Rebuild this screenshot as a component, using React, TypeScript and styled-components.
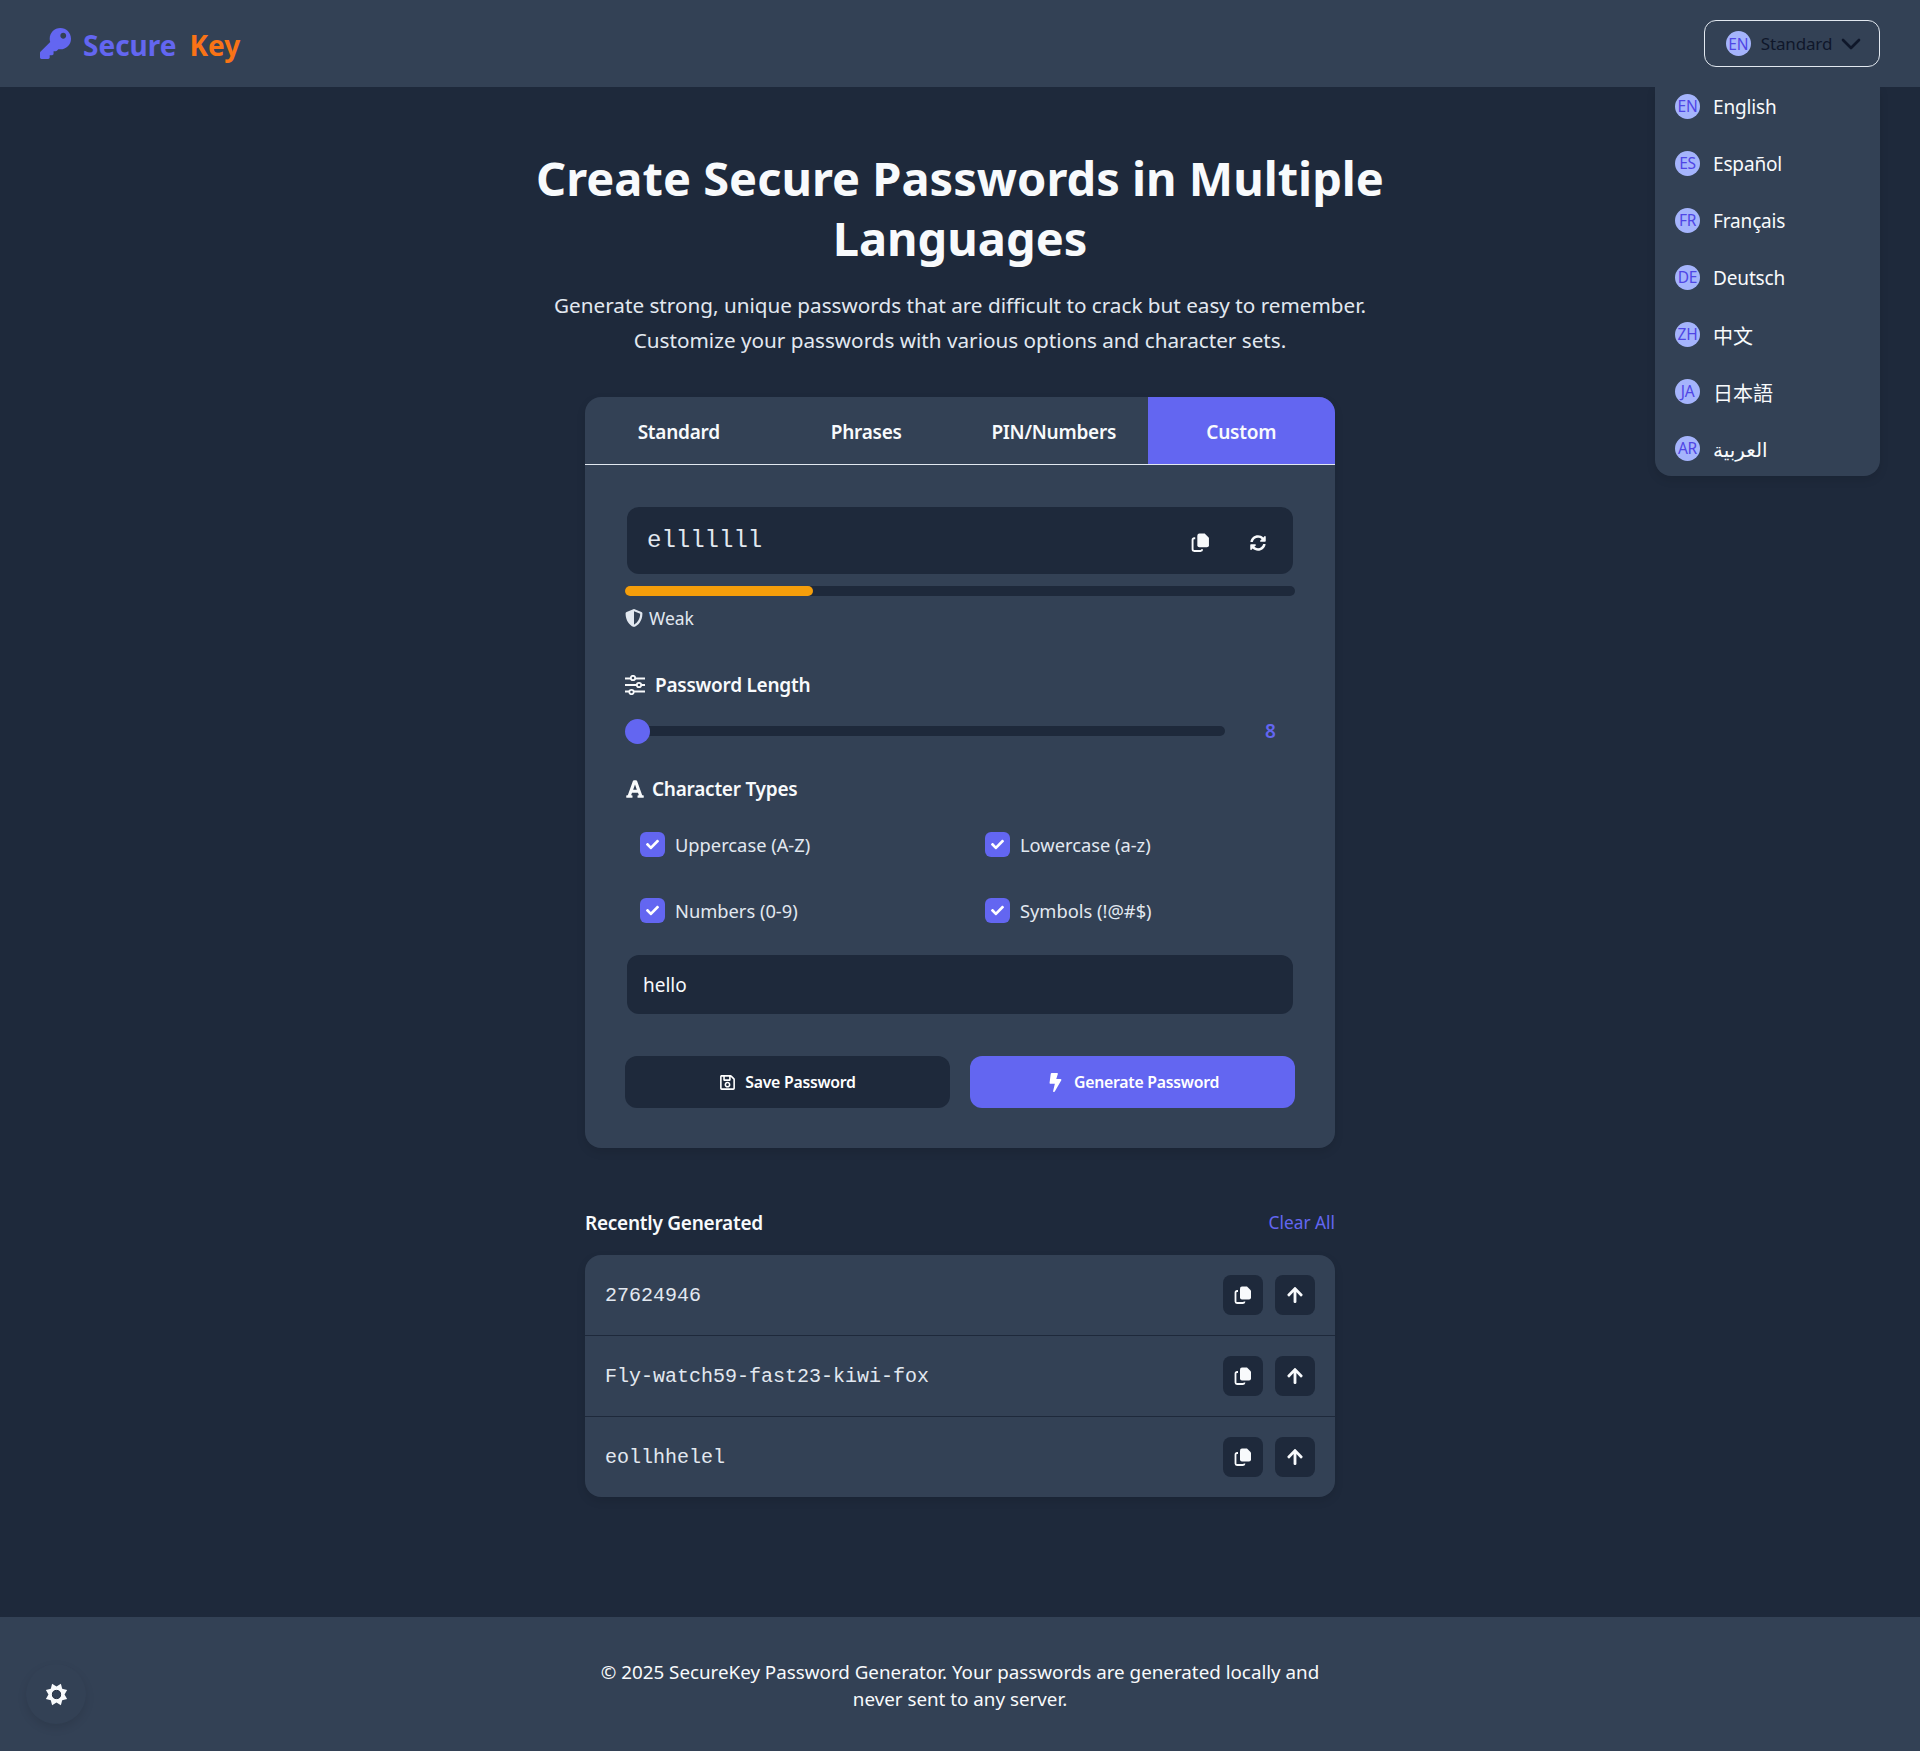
import styled, { createGlobalStyle } from 'styled-components';
import { FaArrowUp, FaBolt, FaCheck, FaFont, FaKey, FaRegSave, FaShieldAlt, FaSyncAlt } from 'react-icons/fa';
import { ChevronDown } from 'lucide-react';

const GlobalStyle = createGlobalStyle`
  * { box-sizing: border-box; }
  body {
    margin: 0;
    background: #1e293b;
    color: #f8fafc;
    font-family: "Noto Sans", "Noto Sans CJK SC", "DejaVu Sans", sans-serif;
  }
`;

const Page = styled.div`
  min-height: 1751px;
  display: flex;
  flex-direction: column;
  position: relative;
`;

const Header = styled.header`
  height: 87px;
  background: #334155;
  display: flex;
  align-items: center;
  justify-content: space-between;
  padding: 0 40px;
  position: relative;
  z-index: 2;
`;

const Logo = styled.div`
  display: flex;
  align-items: center;
  gap: 12px;
  font-size: 28px;
  font-weight: 700;
  color: #6366f1;
  svg { font-size: 31px; }
`;

const LogoText = styled.span`
  position: relative;
  top: 1px;
`;

const LogoAccent = styled.span`
  color: #f97316;
  margin-left: 13px;
`;

const LangButton = styled.button`
  width: 176px;
  height: 47px;
  padding: 0 0 0 1px;
  background: transparent;
  border: 1px solid #e2e8f0;
  border-radius: 12px;
  display: flex;
  align-items: center;
  justify-content: center;
  gap: 10px;
  color: #0f172a;
  font: inherit;
  font-size: 17px;
  letter-spacing: -0.15px;
  svg { margin: 0 -8px 0 -7px; }
`;

const Badge = styled.span`
  width: 25px;
  height: 25px;
  border-radius: 50%;
  background: #a5b4fc;
  color: #4f46e5;
  font-size: 15.500px;
  letter-spacing: -0.3px;
  display: flex;
  align-items: center;
  justify-content: center;
  flex: none;
`;

const Menu = styled.ul`
  position: absolute;
  top: 87px;
  right: 40px;
  width: 225px;
  height: 389px;
  margin: 0;
  padding: 0 0 0 20px;
  list-style: none;
  background: #334155;
  border-radius: 0 0 16px 16px;
  box-shadow: 0 4px 10px rgba(0, 0, 0, 0.1);
  z-index: 1;
`;

const MenuItem = styled.li`
  height: 38px;
  margin-bottom: 19px;
  display: flex;
  align-items: center;
  gap: 13px;
`;

const MenuName = styled.span<{ $full: boolean }>`
  font-size: ${({ $full }) => ($full ? 20 : 19)}px;
  letter-spacing: ${({ $full }) => ($full ? 0 : -0.15)}px;
  position: relative;
  top: 1px;
`;

const Main = styled.main`
  flex: 1;
  display: flex;
  flex-direction: column;
  align-items: center;
  padding-top: 61px;
`;

const Title = styled.h1`
  width: 900px;
  margin: 0;
  font-size: 47px;
  line-height: 60px;
  font-weight: 700;
  text-align: center;
`;

const Lead = styled.p`
  width: 900px;
  margin: 20px 0 39px;
  font-size: 20.700px;
  line-height: 35px;
  text-align: center;
  color: #e2e8f0;
`;

const Card = styled.section`
  width: 750px;
  background: #334155;
  border-radius: 16px;
  box-shadow: 0 4px 10px rgba(0, 0, 0, 0.1);
  overflow: hidden;
`;

const Tabs = styled.div`
  display: grid;
  grid-template-columns: repeat(4, 1fr);
  border-bottom: 1px solid #e2e8f0;
`;

const Tab = styled.div<{ $active?: boolean }>`
  height: 67px;
  padding-top: 2px;
  display: flex;
  align-items: center;
  justify-content: center;
  font-size: 19px;
  letter-spacing: -0.25px;
  font-weight: 600;
  background: ${({ $active }) => ($active ? '#6366f1' : 'transparent')};
`;

const CardBody = styled.div`
  padding: 42px 40px 40px;
`;

const PasswordBox = styled.div`
  height: 67px;
  margin: 0 2px;
  background: #1e293b;
  border-radius: 12px;
  display: flex;
  align-items: center;
  padding: 0 20px;
`;

const PasswordText = styled.span`
  flex: 1;
  font-family: "Liberation Mono", monospace;
  font-size: 24px;
  color: #e2e8f0;
`;

const IconAction = styled.span`
  width: 57px;
  display: flex;
  justify-content: center;
  position: relative;
  top: 2px;
  left: -2px;
  font-size: 19px;
  color: #f8fafc;
  &:last-child { margin-right: -15px; }
`;

const Meter = styled.div`
  height: 10px;
  margin-top: 12px;
  background: #1e293b;
  border-radius: 5px;
`;

const MeterFill = styled.div`
  height: 100%;
  background: #f59e0b;
  border-radius: 5px;
`;

const Strength = styled.div`
  display: flex;
  align-items: center;
  gap: 6px;
  margin-top: 10px;
  font-size: 17.500px;
  color: #e2e8f0;
`;

const SectionLabel = styled.div<{ $top: number; $gap: number }>`
  display: flex;
  align-items: center;
  gap: ${({ $gap }) => $gap}px;
  margin-top: ${({ $top }) => $top}px;
  font-size: 19px;
  letter-spacing: -0.25px;
  font-weight: 600;
`;

const SliderRow = styled.div`
  display: flex;
  align-items: center;
  margin-top: 20px;
`;

const Slider = styled.input`
  appearance: none;
  flex: none;
  width: 600px;
  height: 10px;
  margin: 0;
  background: #1e293b;
  border-radius: 5px;
  &::-webkit-slider-thumb {
    appearance: none;
    width: 25px;
    height: 25px;
    border-radius: 50%;
    background: #6366f1;
  }
`;

const SliderValue = styled.span`
  margin-left: 40px;
  font-size: 19px;
  font-weight: 600;
  color: #6366f1;
`;

const Checks = styled.div`
  display: grid;
  grid-template-columns: 325px 325px;
  column-gap: 20px;
  row-gap: 41px;
  margin-top: 30px;
  padding-left: 15px;
`;

const Check = styled.label`
  display: flex;
  align-items: center;
  gap: 10px;
  height: 25px;
  font-size: 18.300px;
  color: #e2e8f0;
`;

const CheckBox = styled.span`
  width: 25px;
  height: 25px;
  border-radius: 6px;
  background: #6366f1;
  color: #fff;
  display: flex;
  align-items: center;
  justify-content: center;
  font-size: 13px;
`;

const TextField = styled.div`
  height: 59px;
  margin: 32px 2px 0;
  padding: 1px 16px 0;
  background: #1e293b;
  border-radius: 12px;
  display: flex;
  align-items: center;
  font-size: 19px;
`;

const Buttons = styled.div`
  display: grid;
  grid-template-columns: 1fr 1fr;
  gap: 20px;
  margin-top: 42px;
`;

const ActionButton = styled.button<{ $primary?: boolean }>`
  height: 52px;
  border: none;
  border-radius: 12px;
  background: ${({ $primary }) => ($primary ? '#6366f1' : '#1e293b')};
  color: #fff;
  font: inherit;
  font-size: 15.800px;
  letter-spacing: -0.25px;
  font-weight: 600;
  display: flex;
  align-items: center;
  justify-content: center;
  gap: 9px;
`;

const RecentHeader = styled.div`
  width: 750px;
  margin-top: 62px;
  height: 25px;
  display: flex;
  align-items: center;
  justify-content: space-between;
`;

const RecentTitle = styled.h2`
  margin: 0;
  font-size: 19px;
  letter-spacing: -0.25px;
  font-weight: 600;
`;

const ClearAll = styled.a`
  font-size: 17.300px;
  color: #6366f1;
`;

const RecentList = styled.div`
  width: 750px;
  margin-top: 20px;
  background: #334155;
  border-radius: 16px;
  box-shadow: 0 4px 10px rgba(0, 0, 0, 0.1);
`;

const RecentRow = styled.div`
  height: 81px;
  display: flex;
  align-items: center;
  gap: 12px;
  padding: 0 20px;
  border-bottom: 1px solid #1e293b;
  &:last-child {
    height: 80px;
    border-bottom: none;
  }
`;

const RecentText = styled.span`
  flex: 1;
  font-family: "Liberation Mono", monospace;
  font-size: 20px;
  color: #e2e8f0;
`;

const SmallButton = styled.span`
  width: 40px;
  height: 40px;
  border-radius: 8px;
  background: #1e293b;
  display: flex;
  align-items: center;
  justify-content: center;
  font-size: 18px;
`;

const Footer = styled.footer`
  height: 134px;
  background: #334155;
  display: flex;
  justify-content: center;
  padding-top: 42px;
  font-size: 18.800px;
  line-height: 27px;
  text-align: center;
`;

const FooterText = styled.p`
  width: 750px;
  margin: 0;
`;

const GearButton = styled.span`
  position: absolute;
  left: 26px;
  top: 1664px;
  width: 60px;
  height: 60px;
  border-radius: 50%;
  background: #334155;
  box-shadow: 0 4px 10px rgba(0, 0, 0, 0.1);
  display: flex;
  align-items: center;
  justify-content: center;
  font-size: 23px;
`;

function CopyIcon() {
  return (
    <svg width="1em" height="1em" viewBox="0 0 18 18" aria-hidden="true">
      <path d="M6 2.500A2 2 0 0 1 8 .5h5l4 4v7a2 2 0 0 1-2 2H8a2 2 0 0 1-2-2z" fill="currentColor" />
      <path d="M4 5H3a1.500 1.500 0 0 0-1.500 1.500v9A1.500 1.500 0 0 0 3 17h6a1.500 1.500 0 0 0 1.500-1.500" fill="none" stroke="currentColor" strokeWidth="1.800" />
    </svg>
  );
}

function SlidersIcon() {
  return (
    <svg width="20" height="20" viewBox="0 0 20 20" aria-hidden="true" stroke="currentColor" strokeWidth="1.800" fill="#334155">
      <path d="M0 3.500h20M0 10h20M0 16.500h20" />
      <circle cx="8" cy="3" r="2.200" />
      <circle cx="14" cy="10" r="2.200" />
      <circle cx="6.500" cy="17" r="2.200" />
    </svg>
  );
}

// eight pointed star with a ring in the middle, the settings glyph of the reference
function GearIcon() {
  const points = Array.from({ length: 16 }, (_, i) => {
    const r = i % 2 === 0 ? 12 : 8.4;
    const a = (i * Math.PI) / 8 + Math.PI / 8;
    return `${(12 + r * Math.cos(a)).toFixed(2)},${(12 + r * Math.sin(a)).toFixed(2)}`;
  });
  return (
    <svg width="1em" height="1em" viewBox="0 0 24 24" aria-hidden="true">
      <polygon points={points.join(' ')} fill="currentColor" />
      <circle cx="12" cy="12" r="4.300" fill="#334155" stroke="#1e293b" strokeWidth="1" />
    </svg>
  );
}

const LANGUAGES = [
  ['EN', 'English'],
  ['ES', 'Español'],
  ['FR', 'Français'],
  ['DE', 'Deutsch'],
  ['ZH', '中文'],
  ['JA', '日本語'],
  ['AR', 'العربية'],
];

const RECENT = ['27624946', 'Fly-watch59-fast23-kiwi-fox', 'eollhhelel'];

export default function App() {
  return (
    <Page>
      <GlobalStyle />
      <Header>
        <Logo>
          <FaKey />
          <LogoText>
            Secure<LogoAccent>Key</LogoAccent>
          </LogoText>
        </Logo>
        <LangButton>
          <Badge>EN</Badge>
          Standard
          <ChevronDown size={32} strokeWidth={2} />
        </LangButton>
      </Header>
      <Menu>
        {LANGUAGES.map(([code, name]) => (
          <MenuItem key={code}>
            <Badge>{code}</Badge>
            <MenuName $full={code === 'ZH' || code === 'JA' || code === 'AR'}>{name}</MenuName>
          </MenuItem>
        ))}
      </Menu>
      <Main>
        <Title>Create Secure Passwords in Multiple Languages</Title>
        <Lead>
          Generate strong, unique passwords that are difficult to crack but easy to remember.
          <br />
          Customize your passwords with various options and character sets.
        </Lead>
        <Card>
          <Tabs>
            <Tab>Standard</Tab>
            <Tab>Phrases</Tab>
            <Tab>PIN/Numbers</Tab>
            <Tab $active>Custom</Tab>
          </Tabs>
          <CardBody>
            <PasswordBox>
              <PasswordText>elllllll</PasswordText>
              <IconAction><CopyIcon /></IconAction>
              <IconAction><FaSyncAlt size={16} /></IconAction>
            </PasswordBox>
            <Meter>
              <MeterFill style={{ width: '28%' }} />
            </Meter>
            <Strength>
              <FaShieldAlt size={18} />
              Weak
            </Strength>
            <SectionLabel $top={42} $gap={10}>
              <SlidersIcon />
              Password Length
            </SectionLabel>
            <SliderRow>
              <Slider type="range" min={8} max={32} defaultValue={8} />
              <SliderValue>8</SliderValue>
            </SliderRow>
            <SectionLabel $top={32} $gap={7}>
              <FaFont size={20} />
              Character Types
            </SectionLabel>
            <Checks>
              {['Uppercase (A-Z)', 'Lowercase (a-z)', 'Numbers (0-9)', 'Symbols (!@#$)'].map((label) => (
                <Check key={label}>
                  <CheckBox><FaCheck /></CheckBox>
                  {label}
                </Check>
              ))}
            </Checks>
            <TextField>hello</TextField>
            <Buttons>
              <ActionButton>
                <FaRegSave size={17} />
                Save Password
              </ActionButton>
              <ActionButton $primary>
                <FaBolt size={19} />
                Generate Password
              </ActionButton>
            </Buttons>
          </CardBody>
        </Card>
        <RecentHeader>
          <RecentTitle>Recently Generated</RecentTitle>
          <ClearAll>Clear All</ClearAll>
        </RecentHeader>
        <RecentList>
          {RECENT.map((item) => (
            <RecentRow key={item}>
              <RecentText>{item}</RecentText>
              <SmallButton><CopyIcon /></SmallButton>
              <SmallButton><FaArrowUp /></SmallButton>
            </RecentRow>
          ))}
        </RecentList>
      </Main>
      <Footer>
        <FooterText>© 2025 SecureKey Password Generator. Your passwords are generated locally and never sent to any server.</FooterText>
      </Footer>
      <GearButton><GearIcon /></GearButton>
    </Page>
  );
}
